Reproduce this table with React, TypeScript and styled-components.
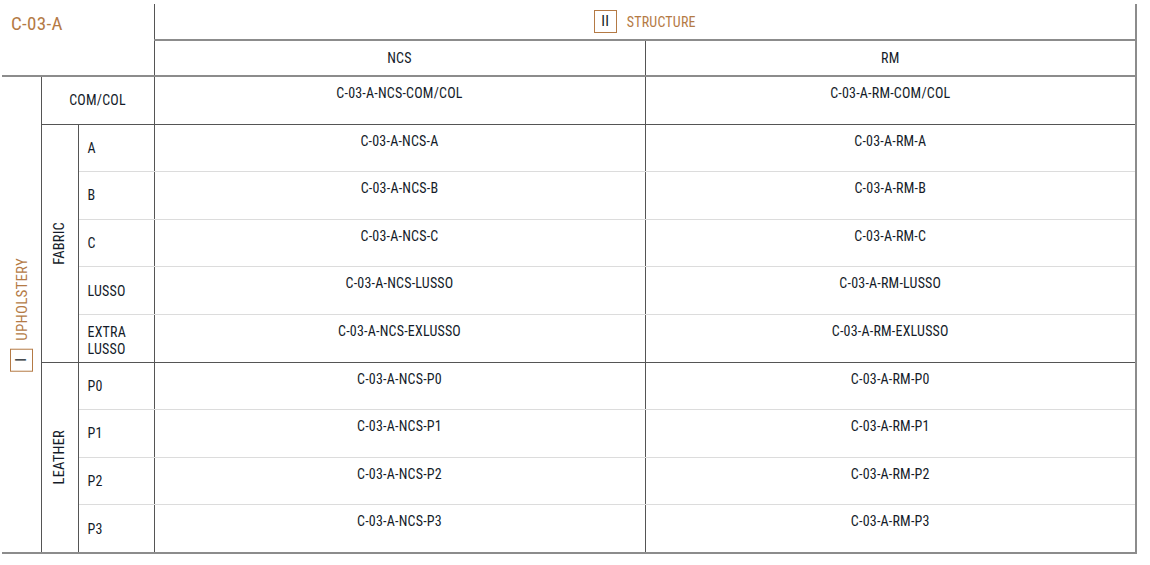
import React from 'react';
import styled, { createGlobalStyle } from 'styled-components';

const ACCENT = '#b47a45';
const INK = '#141b29';
const DARK_LINE = '#555555';
const GREY_LINE = '#8c8c8c';
const SOFT_LINE = '#dcdcdc';
const ROW_H = '46.6px';

const GlobalStyle = createGlobalStyle`
  html, body {
    margin: 0;
    padding: 0;
    background: #fff;
  }
  body {
    font-family: "Roboto Condensed", "Liberation Sans Narrow", "DejaVu Sans Condensed", Roboto, "Liberation Sans", sans-serif;
    font-stretch: condensed;
    color: ${INK};
  }
`;

const Page = styled.div`
  padding: 4px 0 0 2px;
  width: 1134px;
`;

const Table = styled.table`
  width: 1134px;
  border-collapse: collapse;
  table-layout: fixed;
  font-size: 14px;
  line-height: 16px;
  letter-spacing: 0.2px;
`;

type Edge = 'dark' | 'grey' | 'soft' | 'none';

const lineFor = (e: Edge) => {
  if (e === 'dark') return `1px solid ${DARK_LINE}`;
  if (e === 'grey') return `2px solid ${GREY_LINE}`;
  if (e === 'soft') return `1px solid ${SOFT_LINE}`;
  return 'none';
};

const Cell = styled.td<{ $right?: Edge; $bottom?: Edge; $align?: 'left' | 'center' }>`
  padding: 0;
  border-right: ${({ $right = 'dark' }) => lineFor($right)};
  border-bottom: ${({ $bottom = 'soft' }) => lineFor($bottom)};
  text-align: ${({ $align = 'center' }) => $align};
`;

const TitleCell = styled(Cell)`
  vertical-align: top;
  padding: 9px 0 0 9px;
  text-align: left;
  color: ${ACCENT};
  font-size: 19px;
  line-height: 22px;
  letter-spacing: 0.3px;
`;

const GroupHeader = styled(Cell)`
  height: 35px;
  vertical-align: middle;
`;

const ColumnHeader = styled(Cell)`
  height: 34px;
  vertical-align: middle;
`;

const Badge = styled.span`
  display: inline-flex;
  align-items: center;
  gap: 10px;
  color: ${ACCENT};
  font-size: 14px;
`;

const Numeral = styled.span`
  display: inline-flex;
  align-items: center;
  justify-content: center;
  width: 21px;
  height: 21px;
  border: 1px solid ${ACCENT};
  color: ${INK};
  font-size: 15px;
  line-height: 1;
`;

const SideCell = styled(Cell)`
  vertical-align: middle;
`;

const VerticalLabel = styled.div<{ $accent?: boolean }>`
  display: flex;
  align-items: center;
  justify-content: center;
  gap: 8px;
  margin: 0 auto;
  writing-mode: vertical-rl;
  transform: rotate(180deg);
  color: ${({ $accent }) => ($accent ? ACCENT : INK)};
  font-size: ${({ $accent }) => ($accent ? '15px' : '14.5px')};
`;

const RowLabel = styled(Cell)`
  height: ${ROW_H};
  vertical-align: middle;
  padding-left: 9px;
`;

const CenteredLabel = styled(RowLabel)`
  padding-left: 0;
  text-align: center;
`;

const DataCell = styled(Cell)`
  vertical-align: top;
  padding-top: 8px;
`;

const Multi = styled.span`
  white-space: pre-line;
  display: inline-block;
  padding-top: 6px;
  line-height: 17px;
`;

type Row = { label: string; code: string };

const fabric: Row[] = [
  { label: 'A', code: 'A' },
  { label: 'B', code: 'B' },
  { label: 'C', code: 'C' },
  { label: 'LUSSO', code: 'LUSSO' },
  { label: 'EXTRA\nLUSSO', code: 'EXLUSSO' },
];

const leather: Row[] = [
  { label: 'P0', code: 'P0' },
  { label: 'P1', code: 'P1' },
  { label: 'P2', code: 'P2' },
  { label: 'P3', code: 'P3' },
];

const GroupRows = ({
  name,
  rows,
  closing,
}: {
  name: string;
  rows: Row[];
  closing: Edge;
}) => (
  <>
    {rows.map((r, i) => {
      const bottom: Edge = i === rows.length - 1 ? closing : 'soft';
      return (
        <tr key={r.code}>
          {i === 0 && (
            <SideCell rowSpan={rows.length} $bottom={closing}>
              <VerticalLabel>{name}</VerticalLabel>
            </SideCell>
          )}
          <RowLabel $align="left" $bottom={bottom}>
            {r.label.includes('\n') ? <Multi>{r.label}</Multi> : r.label}
          </RowLabel>
          <DataCell $bottom={bottom}>C-03-A-NCS-{r.code}</DataCell>
          <DataCell $bottom={bottom} $right="grey">
            C-03-A-RM-{r.code}
          </DataCell>
        </tr>
      );
    })}
  </>
);

export default function App() {
  return (
    <Page>
      <GlobalStyle />
      <Table>
        <colgroup>
          <col style={{ width: 39 }} />
          <col style={{ width: 37 }} />
          <col style={{ width: 76 }} />
          <col style={{ width: 491 }} />
          <col style={{ width: 491 }} />
        </colgroup>
        <tbody>
          <tr>
            <TitleCell colSpan={3} rowSpan={2} $bottom="grey">
              C-03-A
            </TitleCell>
            <GroupHeader colSpan={2} $right="grey" $bottom="grey">
              <Badge>
                <Numeral>II</Numeral>
                STRUCTURE
              </Badge>
            </GroupHeader>
          </tr>
          <tr>
            <ColumnHeader $bottom="grey">NCS</ColumnHeader>
            <ColumnHeader $right="grey" $bottom="grey">
              RM
            </ColumnHeader>
          </tr>
          <tr>
            <SideCell rowSpan={10} $bottom="grey">
              <VerticalLabel $accent>
                <Numeral>I</Numeral>
                UPHOLSTERY
              </VerticalLabel>
            </SideCell>
            <CenteredLabel colSpan={2} $bottom="dark">
              COM/COL
            </CenteredLabel>
            <DataCell $bottom="dark">C-03-A-NCS-COM/COL</DataCell>
            <DataCell $bottom="dark" $right="grey">
              C-03-A-RM-COM/COL
            </DataCell>
          </tr>
          <GroupRows name="FABRIC" rows={fabric} closing="dark" />
          <GroupRows name="LEATHER" rows={leather} closing="grey" />
        </tbody>
      </Table>
    </Page>
  );
}
